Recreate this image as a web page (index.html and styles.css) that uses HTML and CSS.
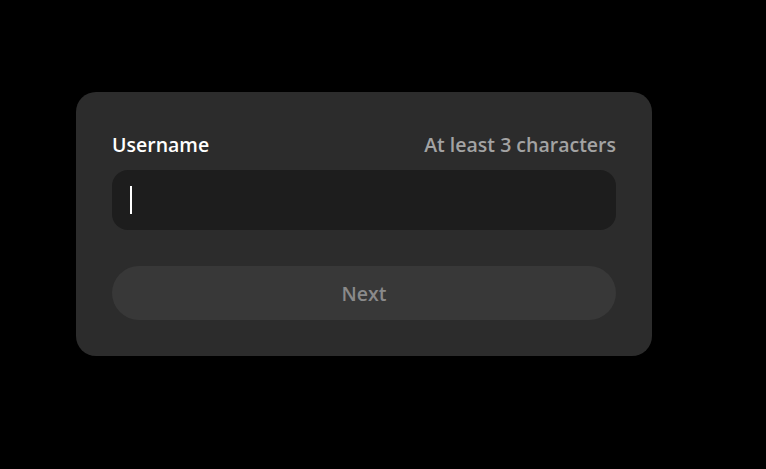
FILE: index.html
```html
<!DOCTYPE html>
<html>
<head>
<meta charset="utf-8">
<link rel="stylesheet" href="styles.css">
</head>
<body>
<div class="card">
  <div class="label-row">
    <span class="label">Username</span>
    <span class="hint">At least 3 characters</span>
  </div>
  <div class="input"><span class="caret"></span></div>
  <div class="button">Next</div>
</div>
</body>
</html>
```
FILE: styles.css
```css
html, body {
  margin: 0;
  background: #000;
}
body {
  padding: 92px 0 0 76px;
  font-family: "Open Sans", "Noto Sans", sans-serif;
}
.card {
  width: 576px;
  box-sizing: border-box;
  padding: 36px;
  background: #2c2c2c;
  border-radius: 20px;
  display: flex;
  flex-direction: column;
}
.label-row {
  display: flex;
  justify-content: space-between;
  align-items: center;
  height: 32px;
  margin-bottom: 10px;
  font-size: 19.5px;
  font-weight: 600;
}
.label {
  color: #fff;
}
.hint {
  color: #a3a3a3;
}
.input {
  height: 60px;
  background: #1d1d1d;
  border-radius: 16px;
  display: flex;
  align-items: center;
  padding-left: 18px;
}
.caret {
  width: 2px;
  height: 28px;
  background: #fff;
}
.button {
  margin-top: 36px;
  height: 54px;
  border-radius: 27px;
  background: #383838;
  color: #8a8a8a;
  font-size: 19.5px;
  font-weight: 600;
  display: flex;
  align-items: center;
  justify-content: center;
  padding-top: 1px;
  box-sizing: border-box;
}
```
